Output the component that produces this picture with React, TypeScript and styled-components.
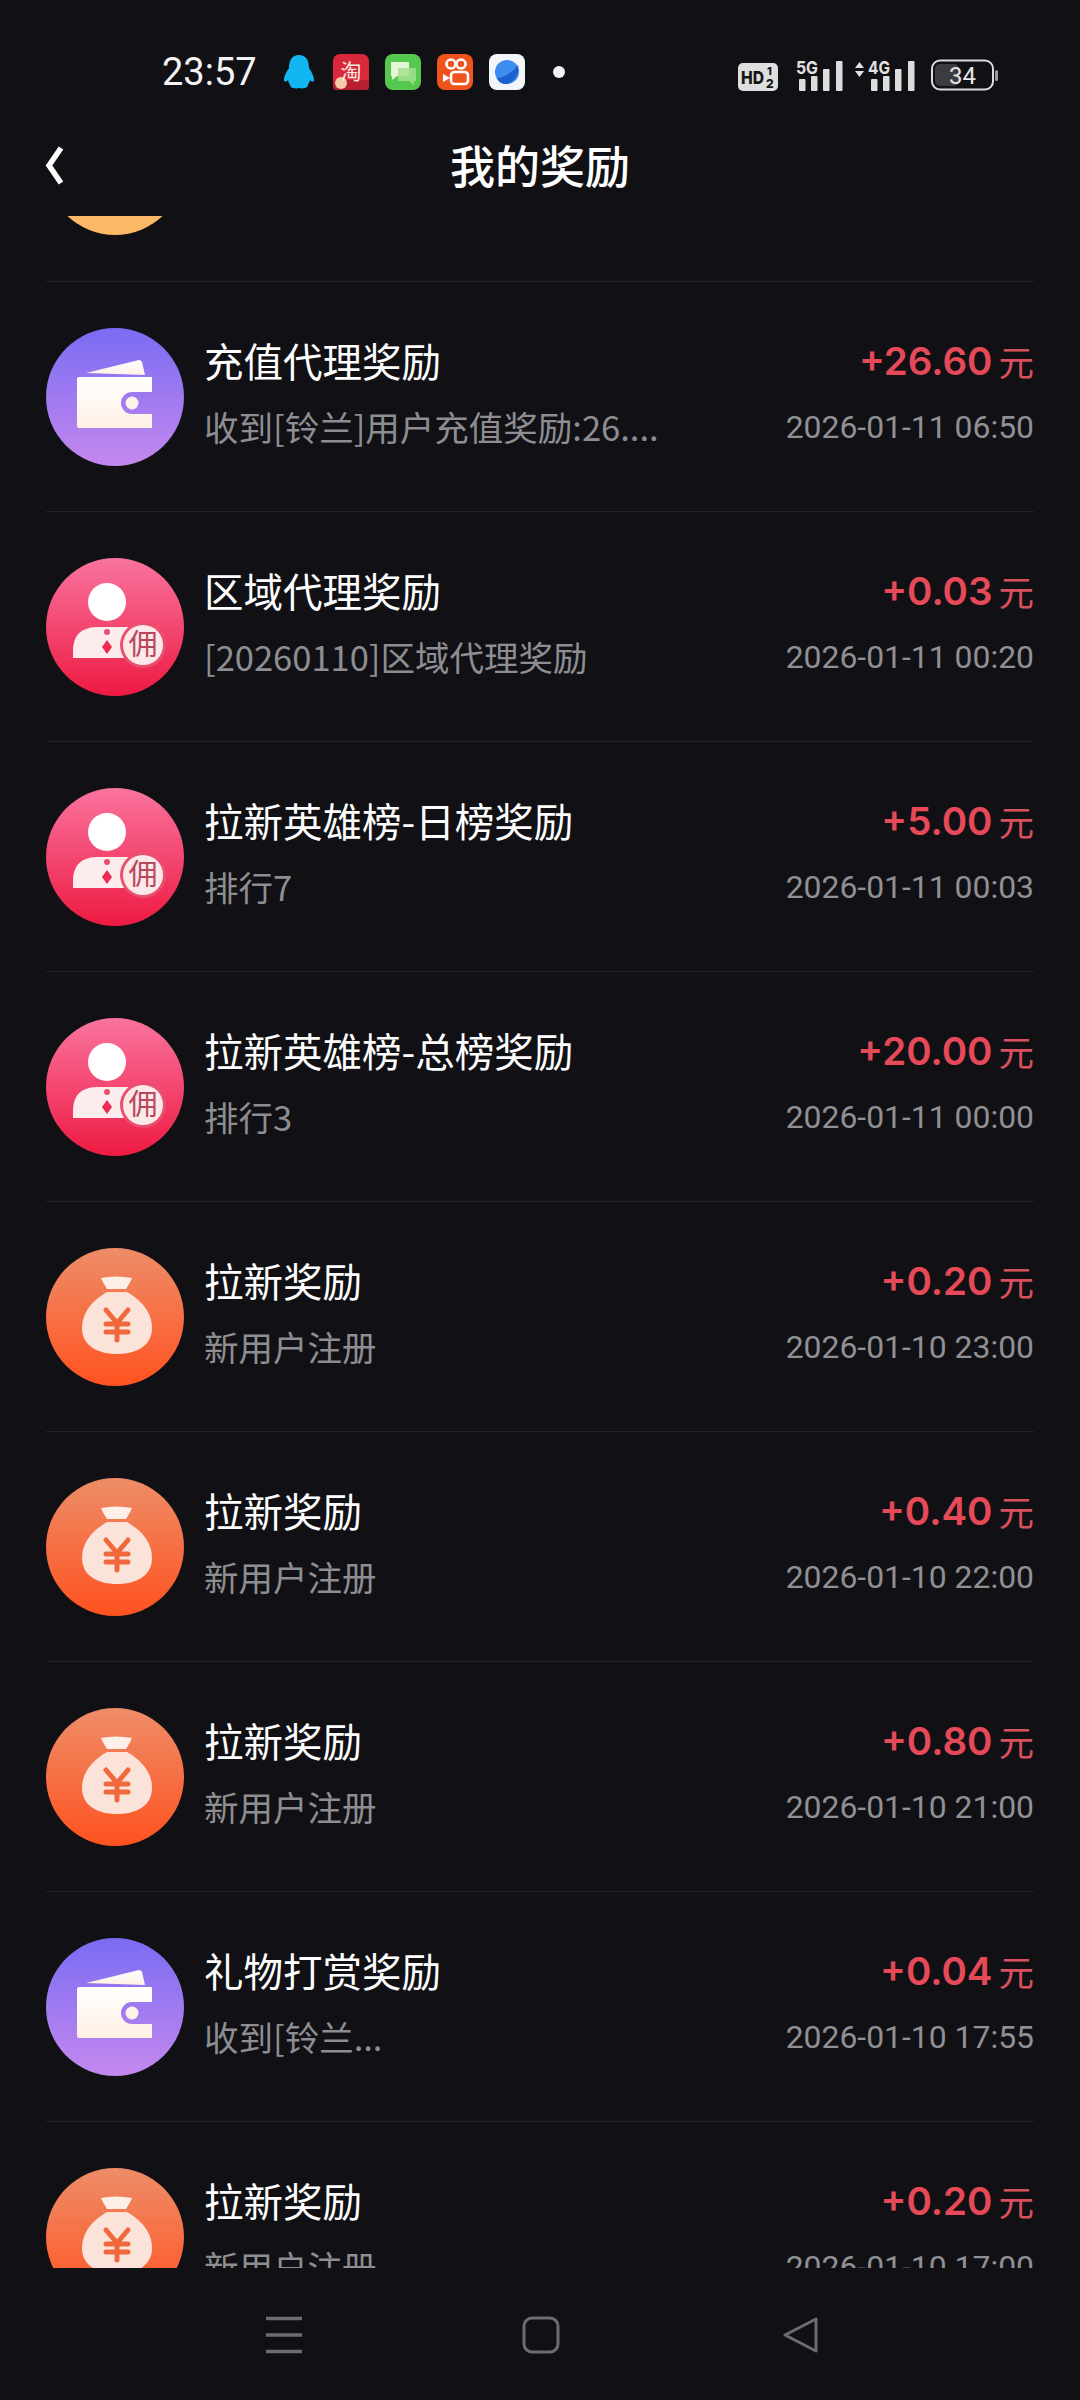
import React from "react";
import styled, { createGlobalStyle } from "styled-components";

const Global = createGlobalStyle`
  html, body { margin: 0; padding: 0; background: #111115; }
  * { box-sizing: border-box; }
`;

const CJK = `"Noto Sans CJK SC", "Noto Sans", sans-serif`;

const Screen = styled.div`
  width: 1080px;
  height: 2400px;
  background: #111115;
  display: flex;
  flex-direction: column;
  overflow: hidden;
  color: #fff;
  font-family: ${CJK};
`;

const StatusBar = styled.div`
  height: 115px;
  flex: none;
  display: flex;
  align-items: center;
  padding: 28px 81px 0 162px;
`;
const Time = styled.span`
  font-family: Roboto, sans-serif;
  font-size: 38px;
  color: #f4f4f4;
  width: 119px;
  flex: none;
`;
const AppIcons = styled.div`
  display: flex;
  align-items: center;
  gap: 16px;
`;
const Dot = styled.span`
  width: 12px;
  height: 12px;
  border-radius: 50%;
  background: #f2f2f2;
  margin-left: 12px;
`;
const SysIcons = styled.div`
  margin-left: auto;
  display: flex;
  align-items: flex-end;
`;
const SysSvg = styled.svg<{ $gap?: number }>`
  display: block;
  flex: none;
  margin-left: ${(p) => p.$gap ?? 0}px;
`;

const Header = styled.header`
  height: 101px;
  flex: none;
  position: relative;
  display: flex;
  align-items: center;
  justify-content: center;
  padding-bottom: 2px;
`;
const BackBtn = styled.svg`
  position: absolute;
  left: 44px;
  top: 31px;
`;
const Title = styled.h1`
  margin: 0;
  font-size: 45px;
  line-height: 60px;
  font-weight: 500;
  color: #fff;
`;

const List = styled.div`
  height: 2052px;
  flex: none;
  overflow: hidden;
  padding: 0 46px;
`;
const ClippedRow = styled.div`
  height: 66px;
  overflow: hidden;
  border-bottom: 1px solid #232327;
`;
const RowWrap = styled.div`
  height: 230px;
  display: flex;
  align-items: center;
  gap: 20px;
  border-bottom: 1px solid #232327;
  flex: none;
`;
const Circle = styled.svg<{ $offset?: number }>`
  display: block;
  flex: none;
  margin-top: ${(p) => p.$offset ?? 0}px;
`;
const Texts = styled.div`
  flex: 1;
  min-width: 0;
  display: flex;
  flex-direction: column;
  gap: 20px;
  padding-bottom: 8px;
`;
const RowTitle = styled.div`
  font-size: 39.5px;
  line-height: 46px;
  color: #fdfdfd;
  white-space: nowrap;
`;
const RowSub = styled.div`
  font-size: 34.5px;
  line-height: 46px;
  color: #8e8e92;
  white-space: nowrap;
`;
const Side = styled.div`
  flex: none;
  display: flex;
  flex-direction: column;
  align-items: flex-end;
  gap: 20px;
  padding-bottom: 6px;
`;
const Amount = styled.div`
  display: flex;
  align-items: center;
  gap: 6px;
  height: 46px;
  color: #e64a58;
`;
const Num = styled.span`
  font-family: Inter, sans-serif;
  font-weight: 600;
  font-size: 38.5px;
`;
const Unit = styled.span`
  font-size: 35.5px;
  color: #d9505d;
  line-height: 46px;
`;
const DateText = styled.div`
  font-family: Roboto, sans-serif;
  font-size: 31.9px;
  line-height: 46px;
  color: #909094;
  white-space: nowrap;
`;

const NavBar = styled.nav`
  flex: 1;
  display: flex;
  align-items: flex-start;
  padding: 48px 0 0 264px;
`;
const NavSvg = styled.svg<{ $gap?: number }>`
  display: block;
  flex: none;
  margin-left: ${(p) => p.$gap ?? 0}px;
`;

type Kind = "wallet" | "agent" | "bag";

const grads: Record<Kind, [string, string]> = {
  wallet: ["#7a6cf3", "#c488ee"],
  agent: ["#f9749e", "#ee1a42"],
  bag: ["#ee8d68", "#ff5220"],
};

function Avatar({ kind, id, offset }: { kind: Kind; id: string; offset?: number }) {
  const [a, b] = grads[kind];
  return (
    <Circle width="138" height="138" viewBox="0 0 138 138" $offset={offset}>
      <defs>
        <linearGradient id={id} x1="0" y1="0" x2="0" y2="1">
          <stop offset="0" stopColor={a} />
          <stop offset="1" stopColor={b} />
        </linearGradient>
        <linearGradient id={id + "i"} x1="0" y1="0" x2="0" y2="1">
          <stop offset="0" stopColor="#ffffff" />
          <stop offset="1" stopColor="#fff0e4" />
        </linearGradient>
      </defs>
      <circle cx="69" cy="69" r="69" fill={`url(#${id})`} />
      {kind === "wallet" && (
        <g>
          <path d="M40 45 L93 32 Q95 32 96 34 L99 47 Z" fill={`url(#${id}i)`} />
          <path
            d="M33 49 H105 Q106 49 106 50 V64 H86 A11 11 0 0 0 86 86 H106 V99 Q106 100 105 100 H33 Q31 100 31 98 V51 Q31 49 33 49 Z"
            fill={`url(#${id}i)`}
          />
          <circle cx="86" cy="75" r="6.5" fill="#fdf3ea" />
        </g>
      )}
      {kind === "agent" && (
        <g>
          <circle cx="61" cy="44" r="19" fill="#fff" />
          <path d="M27 100 V93 Q27 70 50 69 H82 V100 Z" fill="#fdecee" />
          <circle cx="61" cy="74" r="3" fill="#e8506e" />
          <path d="M61 82 L66 89 L61 96 L56 89 Z" fill="#ee2a50" />
          <circle cx="97" cy="87" r="23" fill="#e9506f" />
          <circle cx="97" cy="87" r="20" fill="#fbe9e9" />
          <text x="97" y="97" textAnchor="middle" fontSize="29" fill="#b9475e" fontFamily="Noto Sans CJK SC">佣</text>
        </g>
      )}
      {kind === "bag" && (
        <g>
          <path d="M55 30 Q70 27 86 30 Q84 35 80 41 H61 Q57 35 55 30 Z" fill="#fdf0e8" />
          <path d="M61 44 H81 C95 52 106 64 106 80 C106 98 90 106 71 106 C52 106 36 98 36 80 C36 64 47 52 61 44 Z" fill="#fbe3da" />
          <path d="M60 62 L71 75 L82 62 M71 75 V92 M60 76 H82 M60 84 H82" stroke="#f0693d" strokeWidth="5" strokeLinecap="round" fill="none" />
        </g>
      )}
    </Circle>
  );
}

const rows: { kind: Kind; title: string; sub: string; amount: string; date: string }[] = [
  { kind: "wallet", title: "充值代理奖励", sub: "收到[铃兰]用户充值奖励:26....", amount: "+26.60", date: "2026-01-11 06:50" },
  { kind: "agent", title: "区域代理奖励", sub: "[20260110]区域代理奖励", amount: "+0.03", date: "2026-01-11 00:20" },
  { kind: "agent", title: "拉新英雄榜-日榜奖励", sub: "排行7", amount: "+5.00", date: "2026-01-11 00:03" },
  { kind: "agent", title: "拉新英雄榜-总榜奖励", sub: "排行3", amount: "+20.00", date: "2026-01-11 00:00" },
  { kind: "bag", title: "拉新奖励", sub: "新用户注册", amount: "+0.20", date: "2026-01-10 23:00" },
  { kind: "bag", title: "拉新奖励", sub: "新用户注册", amount: "+0.40", date: "2026-01-10 22:00" },
  { kind: "bag", title: "拉新奖励", sub: "新用户注册", amount: "+0.80", date: "2026-01-10 21:00" },
  { kind: "wallet", title: "礼物打赏奖励", sub: "收到[铃兰...", amount: "+0.04", date: "2026-01-10 17:55" },
  { kind: "bag", title: "拉新奖励", sub: "新用户注册", amount: "+0.20", date: "2026-01-10 17:00" },
];

function Bars({ label, arrows }: { label: string; arrows?: boolean }) {
  const x0 = arrows ? 16 : 3;
  const w = arrows ? 60 : 47;
  return (
    <SysSvg width={w} height="38" viewBox={`0 -6 ${w} 38`} $gap={arrows ? 12 : 18}>
      {arrows && <path d="M0 9 L4.5 3 L9 9 Z M0 12 H9 L4.5 18 Z" fill="#e2e2e2" />}
      <text x={arrows ? 13 : 0} y="15" fontSize="18" fontWeight="700" fill="#e2e2e2" fontFamily="Inter" textLength="22" lengthAdjust="spacingAndGlyphs">{label}</text>
      <rect x={x0} y="20" width="6.5" height="12" rx="1" fill="#dcdcdc" />
      <rect x={x0 + 12} y="17" width="6.5" height="15" rx="1" fill="#dcdcdc" />
      <rect x={x0 + 24} y="10" width="6.5" height="22" rx="1" fill="#dcdcdc" />
      <rect x={x0 + 37} y="2" width="6.5" height="30" rx="1" fill="#dcdcdc" />
    </SysSvg>
  );
}

export default function App() {
  return (
    <Screen>
      <Global />
      <StatusBar>
        <Time>23:57</Time>
        <AppIcons>
          <svg width="36" height="36" viewBox="0 0 36 36">
            <path d="M18 1 C26 1 28 8 28 14 C30 17 33 22 33 26 C33 28 31 28 29 26 C28.5 29 27 30 27 31 C27 34 22 35 18 34 C14 35 9 34 9 31 C9 30 7.5 29 7 26 C5 28 3 28 3 26 C3 22 6 17 8 14 C8 8 10 1 18 1 Z" fill="#12b7f2" />
          </svg>
          <svg width="36" height="36" viewBox="0 0 36 36">
            <rect width="36" height="36" rx="7" fill="#d8283a" />
            <rect y="26" width="36" height="10" rx="3" fill="#b81f30" />
            <circle cx="8" cy="29" r="6" fill="#f4c9a8" />
            <text x="18" y="24.5" textAnchor="middle" fontSize="21" fill="#fdeee0" fontFamily="Noto Sans CJK SC">淘</text>
          </svg>
          <svg width="36" height="36" viewBox="0 0 36 36">
            <rect width="36" height="36" rx="8" fill="#55c94f" />
            <path d="M6 8 H24 V22 H12 L7 26 V22 H6 Z" fill="#e4f5d8" />
            <path d="M13 14 H31 V27 H29 V31 L24 27 H13 Z" fill="#a5e08f" opacity="0.85" />
          </svg>
          <svg width="36" height="36" viewBox="0 0 36 36">
            <rect width="36" height="36" rx="8" fill="#f0541e" />
            <circle cx="14" cy="10" r="4.5" fill="none" stroke="#fff" strokeWidth="2.6" />
            <circle cx="24" cy="10" r="4.5" fill="none" stroke="#fff" strokeWidth="2.6" />
            <rect x="14" y="18" width="17" height="12" rx="3.5" fill="none" stroke="#fff" strokeWidth="2.6" />
            <path d="M6 20 L13 24 L6 28 Z" fill="#fff" />
          </svg>
          <svg width="36" height="36" viewBox="0 0 36 36">
            <rect width="36" height="36" rx="8" fill="#f2f6fb" />
            <circle cx="18" cy="18" r="12" fill="#3d8cf0" />
            <path d="M8 24 C16 24 26 16 29 11 C31 20 24 30 16 30 C12 30 9 27 8 24 Z" fill="#1d5fcf" />
          </svg>
          <Dot />
        </AppIcons>
        <SysIcons>
          <SysSvg width="40" height="28" viewBox="0 0 40 28">
            <rect width="40" height="28" rx="5" fill="#dedede" />
            <text x="3" y="21" fontSize="18" fontWeight="800" fill="#151518" fontFamily="Inter" textLength="23" lengthAdjust="spacingAndGlyphs">HD</text>
            <text x="29" y="12" fontSize="11" fontWeight="800" fill="#151518" fontFamily="Inter">1</text>
            <text x="28" y="25" fontSize="12" fontWeight="800" fill="#151518" fontFamily="Inter">2</text>
          </SysSvg>
          <Bars label="5G" />
          <Bars label="4G" arrows />
          <SysSvg width="68" height="32" viewBox="0 0 68 32" $gap={16}>
            <rect x="1" y="1.5" width="61" height="29" rx="8" fill="#111115" stroke="#dcdcdc" strokeWidth="2" />
            <rect x="4" y="5" width="24" height="22" rx="5" fill="#3c3c40" />
            <text x="31.5" y="25" textAnchor="middle" fontSize="24" fill="#e6e6e6" fontFamily="Roboto">34</text>
            <rect x="64" y="11" width="3" height="11" rx="1.5" fill="#9a9a9a" />
          </SysSvg>
        </SysIcons>
      </StatusBar>
      <Header>
        <BackBtn width="22" height="40" viewBox="0 0 22 40">
          <path d="M17 2 L5 19.5 L17 37" fill="none" stroke="#fff" strokeWidth="5.5" />
        </BackBtn>
        <Title>我的奖励</Title>
      </Header>
      <List>
        <ClippedRow>
          <Circle width="138" height="138" viewBox="0 0 138 138" $offset={-119}>
            <circle cx="69" cy="69" r="69" fill="#fdb866" />
          </Circle>
        </ClippedRow>
        {rows.map((r, i) => (
          <RowWrap key={i}>
            <Avatar kind={r.kind} id={`g${i}`} />
            <Texts>
              <RowTitle>{r.title}</RowTitle>
              <RowSub>{r.sub}</RowSub>
            </Texts>
            <Side>
              <Amount>
                <Num>{r.amount}</Num>
                <Unit>元</Unit>
              </Amount>
              <DateText>{r.date}</DateText>
            </Side>
          </RowWrap>
        ))}
      </List>
      <NavBar>
        <NavSvg width="40" height="38" viewBox="0 0 40 38">
          <path d="M2 2.5 H38 M2 19 H38 M2 35.5 H38" stroke="#6d6d71" strokeWidth="3.5" />
        </NavSvg>
        <NavSvg width="38" height="38" viewBox="0 0 38 38" $gap={218}>
          <rect x="2" y="2" width="34" height="34" rx="8" fill="none" stroke="#6d6d71" strokeWidth="3" />
        </NavSvg>
        <NavSvg width="38" height="38" viewBox="0 0 38 38" $gap={222}>
          <path d="M34 3 V35 L3 19 Z" fill="none" stroke="#6d6d71" strokeWidth="3" strokeLinejoin="round" />
        </NavSvg>
      </NavBar>
    </Screen>
  );
}
